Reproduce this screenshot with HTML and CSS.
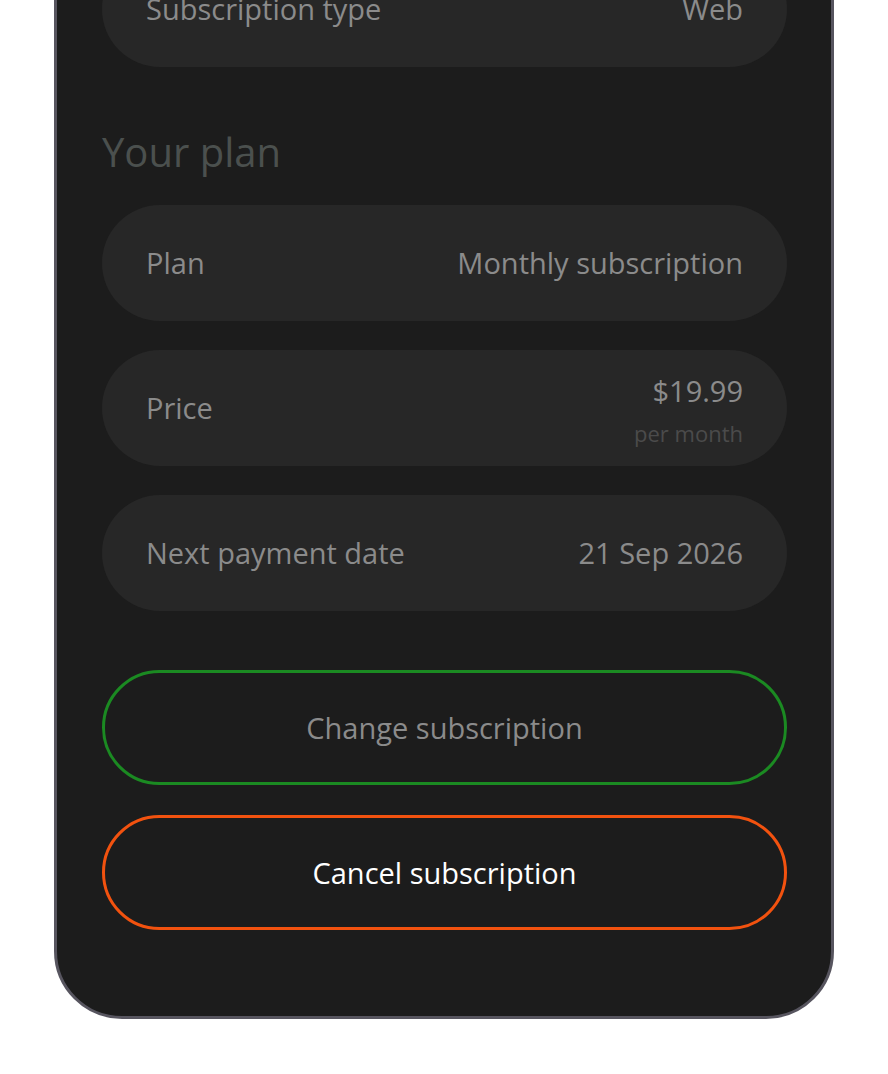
FILE: index.html
```html
<!DOCTYPE html>
<html lang="en">

<head>
    <meta charset="UTF-8">
    <meta name="viewport" content="width=device-width, initial-scale=1.0">
    <title>Subscription</title>
    <link rel="stylesheet" href="styles.css">
</head>

<body>
    <div class="phone">
        <div class="row">
            <div class="label">Subscription type</div>
            <div class="value">Web</div>
        </div>

        <h2 class="section-title">Your plan</h2>

        <div class="rows">
            <div class="row">
                <div class="label">Plan</div>
                <div class="value">Monthly subscription</div>
            </div>

            <div class="row">
                <div class="label">Price</div>
                <div class="value price">
                    <div class="amount">$19.99</div>
                    <div class="period">per month</div>
                </div>
            </div>

            <div class="row">
                <div class="label">Next payment date</div>
                <div class="value">21 Sep 2026</div>
            </div>
        </div>

        <div class="actions">
            <button class="btn btn-change">Change subscription</button>
            <button class="btn btn-cancel">Cancel subscription</button>
        </div>
    </div>
</body>

</html>
```

FILE: styles.css
```css
body {
    margin: 0;
    background: #ffffff;
    font-family: "Open Sans", "Noto Sans", sans-serif;
}

.phone {
    box-sizing: border-box;
    width: 780px;
    margin: -97px auto 0;
    padding: 45px 44px 86px 45px;
    background: #1c1c1c;
    border: 3px solid #57555f;
    border-radius: 0 0 68px 68px;
}

.rows {
    display: flex;
    flex-direction: column;
    gap: 29px;
}

.row {
    display: flex;
    align-items: center;
    justify-content: space-between;
    height: 116px;
    padding: 0 44px;
    background: #272727;
    border-radius: 58px;
    color: #8b8b8b;
    font-size: 29px;
    line-height: 38px;
}

.value {
    text-align: right;
}

.price {
    padding-top: 6px;
}

.amount {
    line-height: 34px;
}

.period {
    margin-top: 10px;
    font-size: 22px;
    line-height: 30px;
    color: #4b4b4b;
}

.section-title {
    margin: 58px 0 26px;
    font-size: 40px;
    font-weight: normal;
    line-height: 54px;
    color: #4b504e;
}

.actions {
    display: flex;
    flex-direction: column;
    gap: 30px;
    margin-top: 59px;
}

.btn {
    height: 115px;
    background: transparent;
    border: 3px solid;
    border-radius: 58px;
    font-family: inherit;
    font-size: 29px;
    cursor: pointer;
}

.btn-change {
    border-color: #1b8a22;
    color: #8b8b8b;
}

.btn-cancel {
    border-color: #f2520f;
    color: #ffffff;
}
```
